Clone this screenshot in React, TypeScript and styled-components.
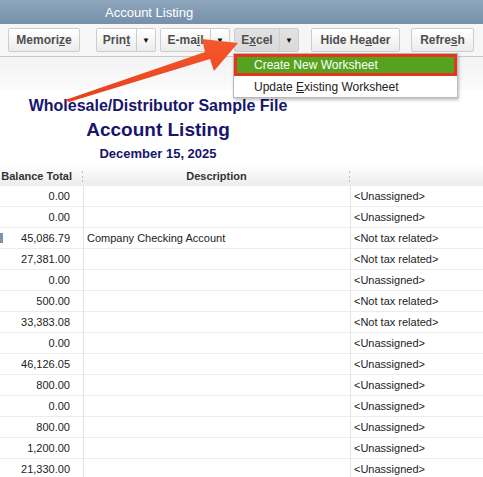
import React from "react";
import styled, { createGlobalStyle } from "styled-components";

const GlobalStyle = createGlobalStyle`
  html, body {
    margin: 0;
    padding: 0;
    background: #ffffff;
    font-family: "Liberation Sans", Arial, sans-serif;
  }
`;

const Page = styled.div`
  position: relative;
  width: 483px;
  height: 477px;
  overflow: hidden;
  background: #fff;
`;

const TitleBar = styled.div`
  height: 24px;
  display: flex;
  align-items: center;
  padding-left: 105px;
  background: linear-gradient(#8ea6bd, #7690aa);
  color: #fff;
  font-size: 13px;
`;

const Toolbar = styled.div`
  height: 32px;
  display: flex;
  align-items: center;
  padding-left: 8px;
  background: #f6f6f6;
  border-bottom: 1px solid #c9c9c9;
`;

const Btn = styled.div<{ pressed?: boolean; w: number; ml?: number }>`
  height: 22px;
  width: ${({ w }) => w}px;
  margin-left: ${({ ml }) => ml ?? 0}px;
  display: flex;
  align-items: stretch;
  border: 1px solid #cdcdcd;
  border-radius: 2px;
  box-sizing: content-box;
  background: ${({ pressed }) =>
    pressed ? "linear-gradient(#e2e2e2, #d9d9d9)" : "linear-gradient(#ffffff, #ececec)"};
  color: #4f4f4f;
  font-weight: bold;
  font-size: 12px;
`;

const BtnLabel = styled.span`
  flex: 1;
  display: flex;
  align-items: center;
  justify-content: center;
  u {
    text-decoration: underline;
  }
`;

const BtnArrow = styled.span`
  width: 18px;
  display: flex;
  align-items: center;
  justify-content: center;
  border-left: 1px solid #cdcdcd;
  font-size: 8px;
  color: #111;
`;

const FilterStrip = styled.div`
  height: 33px;
  background: linear-gradient(#f3f3f3, #fbfbfb);
`;

const Heading = styled.div`
  width: 316px;
  padding-top: 6px;
  display: flex;
  flex-direction: column;
  align-items: center;
  color: #16166b;
  font-weight: bold;
`;

const Company = styled.div`
  font-size: 16px;
  line-height: 20px;
`;

const ReportName = styled.div`
  font-size: 19px;
  line-height: 26px;
  margin-top: 1px;
`;

const ReportDate = styled.div`
  font-size: 13px;
  line-height: 17px;
  margin-top: 2px;
`;

const Grid = styled.div`
  margin-top: 4px;
  display: grid;
  grid-template-columns: 83px 267px 1fr;
`;

const HeadCell = styled.div<{ align: string; pr?: number; divider?: boolean }>`
  height: 20px;
  display: flex;
  align-items: center;
  justify-content: ${({ align }) => align};
  padding-right: ${({ pr }) => pr ?? 0}px;
  position: relative;
  background: linear-gradient(#fdfdfd, #ececec);
  font-size: 11px;
  font-weight: bold;
  color: #333;
  &::after {
    content: "";
    display: ${({ divider }) => (divider ? "block" : "none")};
    position: absolute;
    right: -1px;
    top: 5px;
    height: 11px;
    border-right: 2px dotted #bdbdbd;
  }
`;

const Cell = styled.div<{ kind: "num" | "text" | "tax" }>`
  height: 20px;
  display: flex;
  align-items: center;
  justify-content: ${({ kind }) => (kind === "num" ? "flex-end" : "flex-start")};
  padding: ${({ kind }) => (kind === "num" ? "0 13px 0 0" : "0 0 0 3px")};
  border-bottom: 1px solid #ececec;
  border-left: ${({ kind }) => (kind === "num" ? "none" : "1px solid #e3e3e3")};
  font-size: 11px;
  color: #222;
  position: relative;
`;

const SideMark = styled.span`
  position: absolute;
  left: 0;
  top: 5px;
  width: 3px;
  height: 10px;
  background: #7d93a8;
`;

const Menu = styled.div`
  position: absolute;
  left: 233px;
  top: 53px;
  width: 223px;
  background: #fff;
  border: 1px solid #b9b9b9;
  box-shadow: 1px 2px 3px rgba(0, 0, 0, 0.25);
  font-size: 12px;
`;

const MenuItem = styled.div<{ active?: boolean }>`
  height: ${({ active }) => (active ? 16 : 21)}px;
  display: flex;
  align-items: center;
  padding-left: ${({ active }) => (active ? 17 : 20)}px;
  background: ${({ active }) => (active ? "#55a21f" : "#fff")};
  border: ${({ active }) => (active ? "3px solid #e4361c" : "none")};
  color: ${({ active }) => (active ? "#fff" : "#222")};
`;

const ArrowSvg = styled.svg`
  position: absolute;
  left: 0;
  top: 0;
  pointer-events: none;
`;

const rows: [string, string, string][] = [
  ["0.00", "", "<Unassigned>"],
  ["0.00", "", "<Unassigned>"],
  ["45,086.79", "Company Checking Account", "<Not tax related>"],
  ["27,381.00", "", "<Not tax related>"],
  ["0.00", "", "<Unassigned>"],
  ["500.00", "", "<Not tax related>"],
  ["33,383.08", "", "<Not tax related>"],
  ["0.00", "", "<Unassigned>"],
  ["46,126.05", "", "<Unassigned>"],
  ["800.00", "", "<Unassigned>"],
  ["0.00", "", "<Unassigned>"],
  ["800.00", "", "<Unassigned>"],
  ["1,200.00", "", "<Unassigned>"],
  ["21,330.00", "", "<Unassigned>"],
];

export default function App() {
  return (
    <Page>
      <GlobalStyle />
      <TitleBar>Account Listing</TitleBar>
      <Toolbar>
        <Btn w={70}>
          <BtnLabel>
            <span>
              Memori<u>z</u>e
            </span>
          </BtnLabel>
        </Btn>
        <Btn w={58} ml={16}>
          <BtnLabel>
            <span>
              Prin<u>t</u>
            </span>
          </BtnLabel>
          <BtnArrow>▼</BtnArrow>
        </Btn>
        <Btn w={68} ml={4}>
          <BtnLabel>
            <span>
              E-ma<u>i</u>l
            </span>
          </BtnLabel>
          <BtnArrow>▼</BtnArrow>
        </Btn>
        <Btn w={63} ml={4} pressed>
          <BtnLabel>
            <span>
              E<u>x</u>cel
            </span>
          </BtnLabel>
          <BtnArrow>▼</BtnArrow>
        </Btn>
        <Btn w={87} ml={12}>
          <BtnLabel>
            <span>
              Hide He<u>a</u>der
            </span>
          </BtnLabel>
        </Btn>
        <Btn w={61} ml={11}>
          <BtnLabel>
            <span>
              Refre<u>s</u>h
            </span>
          </BtnLabel>
        </Btn>
      </Toolbar>
      <FilterStrip />
      <Heading>
        <Company>Wholesale/Distributor Sample File</Company>
        <ReportName>Account Listing</ReportName>
        <ReportDate>December 15, 2025</ReportDate>
      </Heading>
      <Grid>
        <HeadCell align="flex-end" pr={11} divider>
          Balance Total
        </HeadCell>
        <HeadCell align="center" divider>
          Description
        </HeadCell>
        <HeadCell align="flex-start" />
        {rows.map(([amt, desc, tax], i) => (
          <React.Fragment key={i}>
            <Cell kind="num">
              {i === 2 && <SideMark />}
              {amt}
            </Cell>
            <Cell kind="text">{desc}</Cell>
            <Cell kind="tax">{tax}</Cell>
          </React.Fragment>
        ))}
      </Grid>
      <Menu>
        <MenuItem active>Create New Worksheet</MenuItem>
        <MenuItem>
          <span>
            Update <u>E</u>xisting Worksheet
          </span>
        </MenuItem>
      </Menu>
      <ArrowSvg width="483" height="477" viewBox="0 0 483 477">
        <defs>
          <linearGradient id="arrowFill" x1="0" y1="0" x2="0" y2="1">
            <stop offset="0" stopColor="#f5592b" />
            <stop offset="1" stopColor="#e8401c" />
          </linearGradient>
        </defs>
        <polygon
          points="65,100 205,52 202,39 238,43 214,71 210,59 69,102"
          fill="url(#arrowFill)"
        />
      </ArrowSvg>
    </Page>
  );
}
